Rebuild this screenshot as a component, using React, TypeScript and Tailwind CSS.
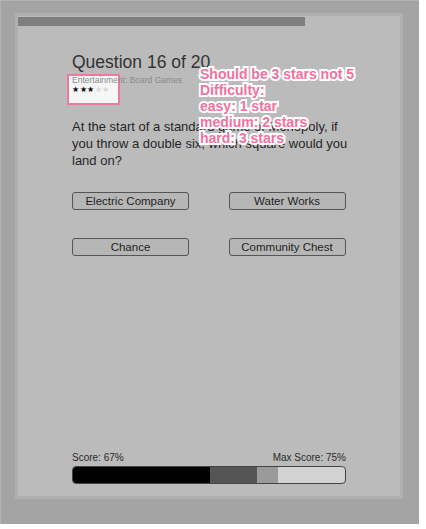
import React from 'react';

const answers = ['Electric Company', 'Water Works', 'Chance', 'Community Chest'];

const notes = [
  'Should be 3 stars not 5',
  'Difficulty:',
  'easy: 1 star',
  'medium: 2 stars',
  'hard: 3 stars',
];

const App: React.FC = () => {
  return (
    <div className="relative w-[426px] h-[529px] bg-white font-['Liberation_Sans',Arial,sans-serif]">
      {/* Outer frame */}
      <div className="w-[419px] h-[524px] bg-[#a4a4a4] border-l border-t border-[#b3b3b3] pt-[12px] pl-[14px]">
        {/* Quiz panel */}
        <div className="relative w-[388px] h-[486px] border-[3px] border-[#b0b0b0] bg-[#bbbbbb] flex flex-col">
          {/* Progress through questions */}
          <div className="mt-[1px] h-[9px] w-[287px] bg-[#7e7e7e]" />

          {/* Highlight box round the stars */}
          <div className="absolute left-[49px] top-[58px] w-[53px] h-[31px] border-2 border-[#ea7aa1] bg-[#f6f6f6]" />

          <div className="relative flex flex-col flex-1 pl-[54px] w-[328px] pb-[12px]">
            <h1 className="mt-[26px] text-[17.5px] leading-[20px] text-[#333]">Question 16 of 20</h1>
            <div className="mt-[3px] text-[8.5px] leading-[10px] text-[#8a8a8a]">Entertainment: Board Games</div>
            <div className="flex text-[8px] leading-[9px] tracking-[0.5px]">
              <span className="text-black">★★★</span>
              <span className="text-[#d8d8d8]">★★</span>
            </div>

            <p className="mt-[24px] w-[290px] text-[13px] leading-[17px] text-[#262626]">
              At the start of a standard game of Monopoly, if
              <br />
              you throw a double six, which square would you
              <br />
              land on?
            </p>

            <div className="mt-[23px] grid grid-cols-2 gap-x-[39px] gap-y-[28px]">
              {answers.map((a) => (
                <button
                  key={a}
                  className="h-[18px] w-[117px] rounded-[3px] border border-[#555] bg-[#b6b6b6] text-[11.5px] leading-[16px] text-[#1e1e1e]"
                >
                  {a}
                </button>
              ))}
            </div>

            <div className="flex-1" />

            <div className="flex justify-between text-[10px] leading-[12px] text-[#2a2a2a]">
              <span>Score: 67%</span>
              <span>Max Score: 75%</span>
            </div>
            <div className="mt-[2px] flex h-[18px] w-[274px] overflow-hidden rounded-[4px] border border-[#444] bg-[#d2d2d2]">
              <div className="w-[137px] bg-black" />
              <div className="w-[47px] bg-[#555]" />
              <div className="w-[21px] bg-[#9a9a9a]" />
            </div>
          </div>
        </div>
      </div>

      {/* Review annotation */}
      <div className="absolute left-[200px] top-[66px] text-[14px] leading-[16px] font-bold text-[#f2719d] [-webkit-text-stroke:4px_white] [paint-order:stroke_fill]">
        {notes.map((n) => (
          <div key={n}>{n}</div>
        ))}
      </div>
    </div>
  );
};

export default App;
